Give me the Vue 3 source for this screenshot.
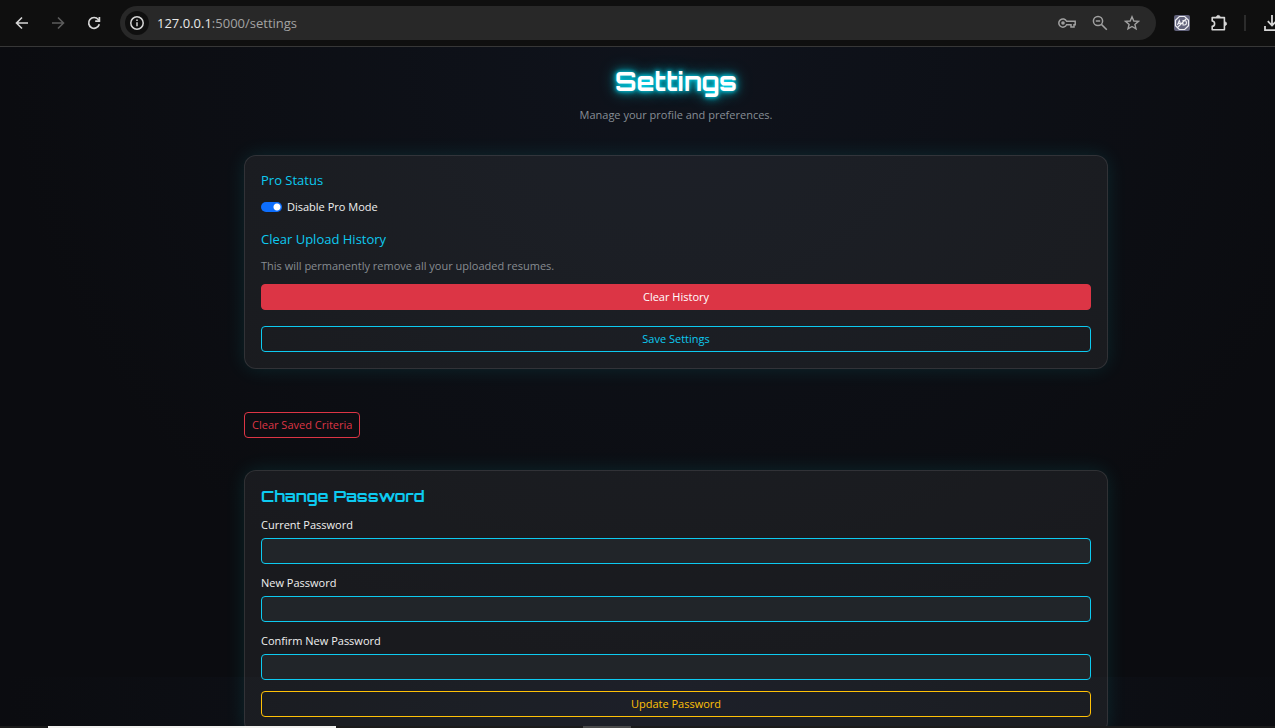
<script setup>
import { ref } from 'vue'

const address = ref('127.0.0.1:5000/settings')
const proMode = ref(true)
const fields = ref([
  { id: 'current', label: 'Current Password', value: '' },
  { id: 'new', label: 'New Password', value: '' },
  { id: 'confirm', label: 'Confirm New Password', value: '' }
])
</script>

<template>
  <div class="window">
    <header class="toolbar">
      <nav class="nav">
        <button class="icon" type="button" aria-label="Back">
          <svg viewBox="0 0 16 16" fill="none" stroke="#d6d6d6" stroke-width="1.6"><path d="M14 8H3M8 2.5 2.5 8 8 13.5" /></svg>
        </button>
        <button class="icon" type="button" aria-label="Forward" disabled>
          <svg viewBox="0 0 16 16" fill="none" stroke="#5c5c5c" stroke-width="1.6"><path d="M2 8h11M8 2.5 13.5 8 8 13.5" /></svg>
        </button>
        <button class="icon" type="button" aria-label="Reload">
          <svg viewBox="0 0 16 16" fill="none" stroke="#d6d6d6" stroke-width="1.7"><path d="M13.3 9.3A5.4 5.4 0 1 1 12.3 4.5L13.5 6" /><path d="M13.4 2V6.2H9.2" /></svg>
        </button>
      </nav>
      <div class="omnibox">
        <button class="info" type="button" aria-label="Site information">
          <svg viewBox="0 0 16 16" fill="none" stroke="#d6d6d6" stroke-width="1.5"><circle cx="8" cy="8" r="6.2" /><path d="M8 7.2v4M8 4.5v1.6" /></svg>
        </button>
        <a class="url" href="#" :aria-label="address"><span class="host">127.0.0.1</span>:5000/settings</a>
        <div class="actions">
          <button class="icon wide" type="button" aria-label="Passwords">
            <svg viewBox="0 0 18 16" fill="none" stroke="#a0a0a0" stroke-width="1.5"><path d="M8.6 6.3H17.2V9.8H16V12H13V9.8H8.6A4.1 4.1 0 1 1 8.6 6.3Z" /><circle cx="5" cy="8" r="1.8" fill="#a0a0a0" stroke="none" /></svg>
          </button>
          <button class="icon" type="button" aria-label="Zoom">
            <svg viewBox="0 0 16 16" fill="none" stroke="#a0a0a0" stroke-width="1.5"><circle cx="6" cy="6" r="4.6" /><path d="M9.4 9.4 14.8 14.8M3.8 6h4.4" /></svg>
          </button>
          <button class="icon" type="button" aria-label="Bookmark">
            <svg viewBox="0 0 16 16" fill="none" stroke="#a0a0a0" stroke-width="1.4"><path d="M8 1.8 9.8 6 14.4 6.4 10.9 9.4 12 13.9 8 11.5 4 13.9 5.1 9.4 1.6 6.4 6.2 6Z" /></svg>
          </button>
        </div>
      </div>
      <button class="icon blocker" type="button" aria-label="Ad blocker">
        <svg viewBox="0 0 16 16" fill="none"><rect width="16" height="16" rx="2" fill="#62637c" /><path d="M5.3 1.5h5.4l3.8 3.8v5.4l-3.8 3.8H5.3l-3.8-3.8V5.3Z" stroke="#eeeef2" stroke-width="1.2" /><path d="M3.5 10 5.3 5.5 6.8 9.5M4.3 8.5h2M9 5.5v4.5h1.5c2.6 0 2.6-4.5 0-4.5ZM3.5 12.5 12.5 3.5" stroke="#eeeef2" stroke-width="1.1" /></svg>
      </button>
      <button class="icon puzzle" type="button" aria-label="Extensions">
        <svg viewBox="0 0 18 18" fill="none" stroke="#d6d6d6" stroke-width="1.6" stroke-linejoin="round"><path d="M2.2 3.6H14.4V15.8H2.2V12.4C5.4 12 5.4 7.4 2.2 7Z" /><path d="M6.5 3.2a1.8 1.8 0 0 1 3.6 0ZM14.8 7.9a1.8 1.8 0 0 1 0 3.6Z" fill="#d6d6d6" stroke-width="0.8" /></svg>
      </button>
      <span class="divider"></span>
      <button class="icon download" type="button" aria-label="Downloads">
        <svg viewBox="0 0 18 18" fill="none" stroke="#d6d6d6" stroke-width="1.8"><path d="M9 1v10M4.8 7.2 9 11.4l4.2-4.2M2 12v4.2h14V12" /></svg>
      </button>
    </header>

    <main class="page">
      <div class="content">
        <header class="heading">
          <h1>Settings</h1>
          <p>Manage your profile and preferences.</p>
        </header>

        <form class="card" @submit.prevent>
          <h2>Pro Status</h2>
          <div class="toggle">
            <input id="pro-mode" v-model="proMode" type="checkbox" role="switch" />
            <label for="pro-mode">Disable Pro Mode</label>
          </div>
          <h2>Clear Upload History</h2>
          <p class="hint">This will permanently remove all your uploaded resumes.</p>
          <button class="btn danger" type="button">Clear History</button>
          <button class="btn info-outline" type="submit">Save Settings</button>
        </form>

        <button class="btn danger-outline" type="button">Clear Saved Criteria</button>

        <form class="card" @submit.prevent>
          <h2 class="display">Change Password</h2>
          <div v-for="field in fields" :key="field.id" class="field">
            <label :for="field.id">{{ field.label }}</label>
            <input :id="field.id" v-model="field.value" type="password" />
          </div>
          <button class="btn warning-outline" type="submit">Update Password</button>
        </form>
      </div>
    </main>

    <div class="dock"><span class="preview"></span><span class="handle"></span></div>
  </div>
</template>

<style>
body {
  margin: 0;
  background: #0b0c10;
}
</style>

<style scoped>
.window {
  position: relative;
  display: flex;
  flex-direction: column;
  height: 100vh;
  overflow: hidden;
  font-family: "Open Sans", "Noto Sans", sans-serif;
  font-size: 11px;
  line-height: 16px;
  color: #f0f0f0;
}

button,
input {
  box-sizing: border-box;
  margin: 0;
  font: inherit;
}

.toolbar {
  display: flex;
  flex: none;
  align-items: center;
  height: 46px;
  padding-left: 14px;
  background: #0f0f0f;
  border-bottom: 1px solid #373737;
}

.nav {
  display: flex;
  gap: 20px;
  margin-right: 18px;
}

.icon {
  flex: none;
  width: 16px;
  height: 16px;
  padding: 0;
  background: none;
  border: 0;
}

.icon svg,
.info svg {
  display: block;
  width: 100%;
  height: 100%;
}

.omnibox {
  display: flex;
  flex: 1;
  align-items: center;
  box-sizing: border-box;
  height: 34px;
  padding: 0 16px 0 5px;
  background: #282828;
  border-radius: 17px;
}

.info {
  width: 24px;
  height: 24px;
  padding: 4px;
  background: #0f0f0f;
  border: 0;
  border-radius: 50%;
}

.url {
  flex: 1;
  margin-left: 8px;
  font-size: 13px;
  line-height: 20px;
  color: #a3a3a3;
  text-decoration: none;
}

.host {
  color: #e8e8e8;
}

.actions {
  display: flex;
  gap: 16px;
}

.wide {
  width: 18px;
}

.blocker {
  margin-left: 18px;
}

.puzzle,
.download {
  width: 18px;
  height: 18px;
}

.puzzle {
  margin-left: 20px;
}

.divider {
  width: 2px;
  height: 16px;
  margin: 0 17px 0 16px;
  background: #2c2c2c;
}

.download {
  margin-right: -6px;
}

.page {
  flex: 1;
  min-height: 0;
  padding: 17px 0 0 77px;
  overflow: hidden;
  background: radial-gradient(ellipse at 53% 0, #0f131c, #0b0c10 70%) 0 0 / 100% 630px;
}

.content {
  max-width: 864px;
  margin: 0 auto;
}

.heading {
  margin-bottom: 32px;
  text-align: center;
}

h1 {
  margin: 0 0 9px;
  font-family: Orbitron, "DejaVu Sans", sans-serif;
  font-size: 26px;
  font-weight: 700;
  line-height: 34px;
  color: #fff;
  text-shadow: 0 0 4px #00e5ff, 0 0 8px #00c8dc, 0 0 16px #008c9c;
}

.heading p {
  margin: 0;
  color: #878e95;
}

.card {
  padding: 16px;
  background: rgba(255, 255, 255, 0.06);
  border: 1px solid rgba(255, 255, 255, 0.1);
  border-radius: 12px;
  box-shadow: 0 0 20px rgba(0, 255, 255, 0.1);
}

h2 {
  margin: 0 0 11px;
  font-size: 13px;
  font-weight: 400;
  line-height: 16px;
  color: #0dcaf0;
}

.display {
  margin-bottom: 12px;
  font-family: Orbitron, "DejaVu Sans", sans-serif;
  font-size: 16px;
  font-weight: 700;
  line-height: 18px;
}

.toggle {
  display: flex;
  gap: 5px;
  align-items: center;
  margin-bottom: 16px;
}

.toggle input {
  width: 21px;
  height: 10px;
  appearance: none;
  background: radial-gradient(circle at 5px 5px, #fff 3px, transparent 4px) #6c757d;
  border-radius: 5px;
}

.toggle input:checked {
  background: radial-gradient(circle at 16px 5px, #fff 3px, transparent 4px) #0d6efd;
}

.hint {
  margin: 0 0 10px;
  color: #878c91;
}

.btn {
  display: block;
  width: 100%;
  height: 26px;
  padding: 0 7px;
  background: transparent;
  border: 1px solid;
  border-radius: 4px;
}

.danger {
  margin-bottom: 16px;
  color: #fff;
  background: #dc3545;
  border-color: #dc3545;
}

.info-outline {
  color: #0dcaf0;
}

.danger-outline {
  width: auto;
  margin: 43px 0 32px;
  color: #dc3545;
}

.warning-outline {
  color: #ffc107;
}

.field {
  margin-bottom: 11px;
}

.field label {
  display: block;
  margin-bottom: 5px;
}

.field input {
  display: block;
  width: 100%;
  height: 26px;
  padding: 0 8px;
  color: #fff;
  background: #212529;
  border: 1px solid #0dcaf0;
  border-radius: 4px;
}

.dock {
  position: absolute;
  right: 0;
  bottom: 0;
  left: 0;
  display: flex;
  height: 2px;
  padding-left: 48px;
  background: #1b1b1b;
}

.preview {
  width: 288px;
  background: #f1f1ef;
}

.handle {
  width: 48px;
  margin-left: 247px;
  background: #4a4a4a;
}
</style>
